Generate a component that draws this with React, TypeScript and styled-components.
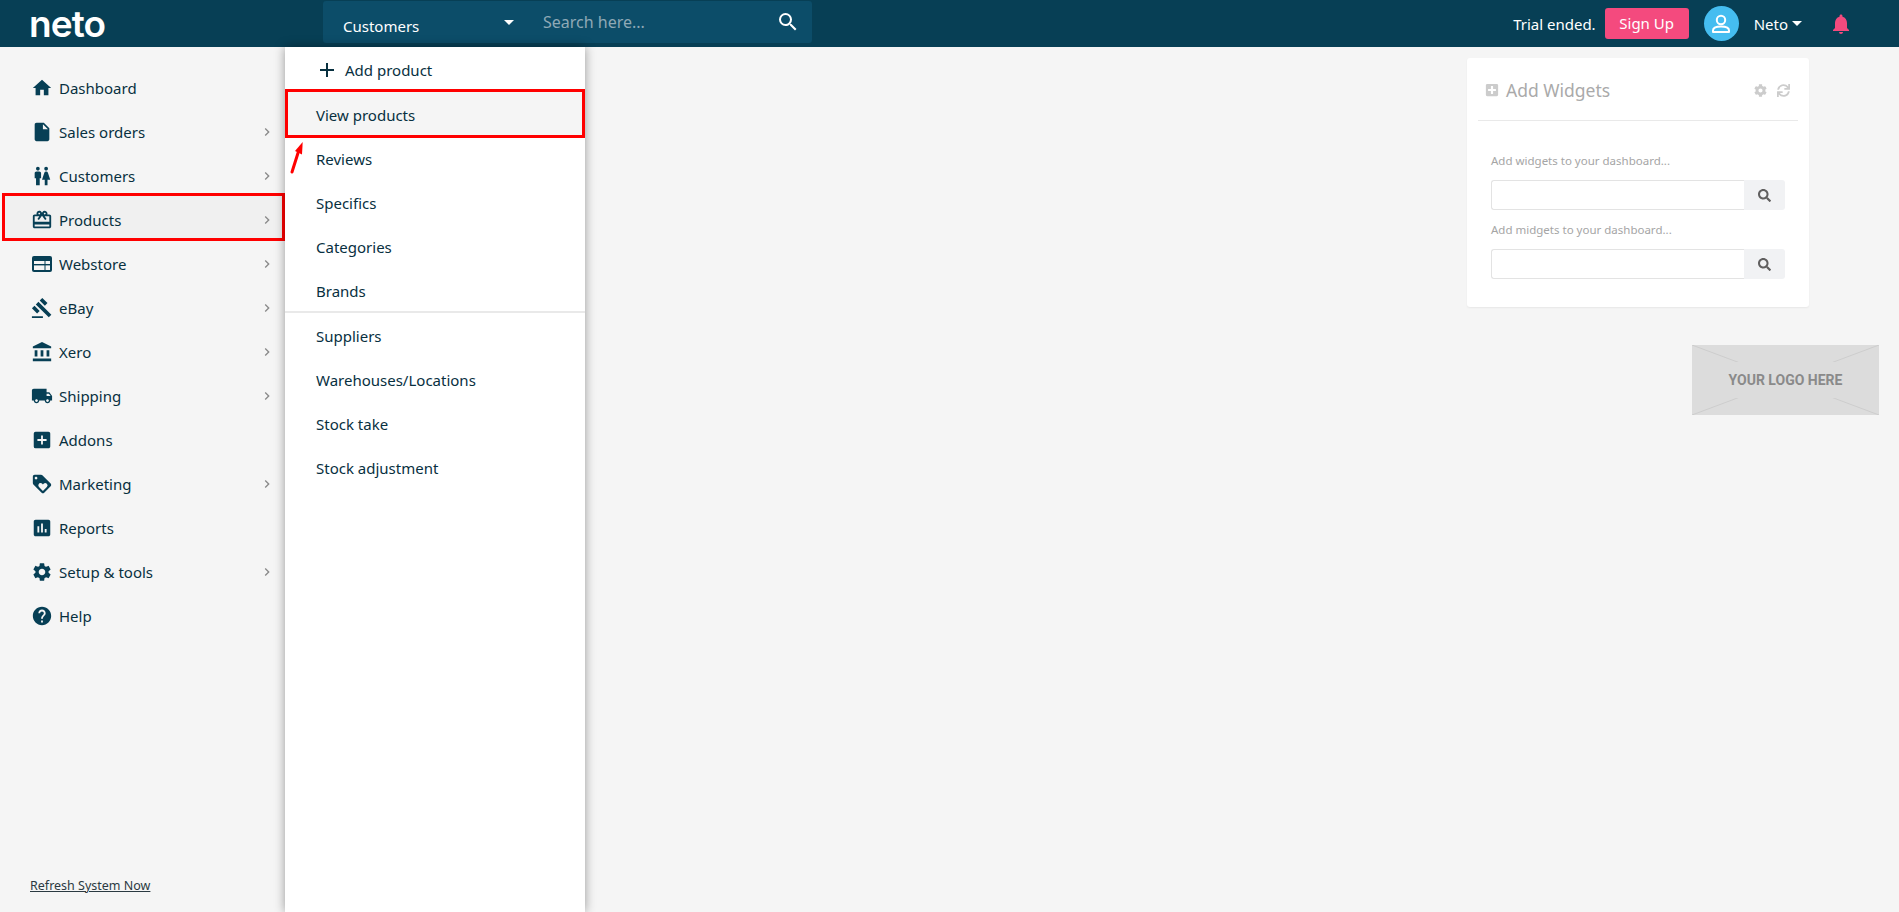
import React from "react";
import styled, { createGlobalStyle } from "styled-components";
import {
  MdHome, MdInsertDriveFile, MdWc, MdCardGiftcard, MdGavel, MdAccountBalance,
  MdLocalShipping, MdAddBox, MdLoyalty, MdAssessment, MdSettings, MdHelp, MdChevronRight,
  MdSearch, MdAdd, MdNotifications,
} from "react-icons/md";
import { FaPlusSquare, FaCog, FaSync, FaSearch } from "react-icons/fa";

const Global = createGlobalStyle`
  html, body { margin: 0; height: 100%; background: #f5f5f5; }
  body { font-family: "Noto Sans", "Open Sans", sans-serif; color: #08303f; overflow: hidden; }
  * { box-sizing: border-box; }
`;

const Page = styled.div`
  position: relative;
  display: flex;
  flex-direction: column;
  height: 912px;
`;

const TopBar = styled.header`
  display: flex;
  align-items: center;
  height: 47px;
  flex: none;
  background: #073f55;
  color: #fff;
`;

const Logo = styled.div`
  width: 323px;
  padding-left: 29px;
  font-family: "Inter", sans-serif;
  font-size: 37px;
  font-weight: 600;
  letter-spacing: -0.9px;
  line-height: 40px;
`;

const SearchBar = styled.div`
  display: flex;
  width: 489px;
  height: 42px;
  margin-top: -3px;
  background: #0c4d69;
  border-radius: 3px;
`;

const ScopeSelect = styled.div`
  display: flex;
  align-items: flex-end;
  justify-content: space-between;
  width: 220px;
  padding: 0 29px 7px 20px;
  font-size: 15px;
  line-height: 20px;
`;

const Caret = styled.span<{ $size?: number }>`
  display: inline-block;
  width: 0;
  height: 0;
  border-left: ${(p) => p.$size ?? 5}px solid transparent;
  border-right: ${(p) => p.$size ?? 5}px solid transparent;
  border-top: ${(p) => p.$size ?? 5}px solid #fff;
`;

const ScopeCaret = styled(Caret)`
  margin-bottom: 11px;
`;

const SearchText = styled.div`
  flex: 1;
  display: flex;
  align-items: center;
  justify-content: space-between;
  padding: 0 12px 1px 0;
  color: #8fa9b6;
  font-size: 16px;
`;

const TopRight = styled.div`
  display: flex;
  align-items: center;
  margin-left: auto;
  padding-right: 46px;
  font-size: 15px;
`;

const SignUp = styled.button`
  width: 84px;
  height: 31px;
  margin: 0 0 1px 9px;
  padding: 0;
  border: 0;
  border-radius: 3px;
  background: #f44a7e;
  color: #fff;
  font: inherit;
  font-size: 15px;
`;

const Avatar = styled.div`
  display: flex;
  align-items: center;
  justify-content: center;
  width: 35px;
  height: 35px;
  margin-left: 15px;
  border-radius: 50%;
  background: #45bdf0;
`;

const UserName = styled.div`
  display: flex;
  align-items: center;
  gap: 4px;
  margin-left: 15px;
`;

const Bell = styled.div`
  display: flex;
  margin-left: 27px;
  color: #f44a7e;
`;

const Body = styled.div`
  flex: 1;
  display: flex;
  min-height: 0;
`;

const Sidebar = styled.nav`
  display: flex;
  flex-direction: column;
  width: 285px;
  flex: none;
  padding-top: 19px;
`;

const NavRow = styled.div<{ $active?: boolean }>`
  display: flex;
  align-items: center;
  height: 44px;
  flex: none;
  padding-left: 31px;
  padding-right: 10px;
  font-size: 15px;
  ${(p) =>
    p.$active &&
    `height: 48px;
     margin: -5px 0 1px 2px;
     padding: 6px 10px 0 29px;
     background: #f0f0f0;
     outline: 3px solid #f00;
     outline-offset: -3px;`}
`;

const NavIcon = styled.span`
  display: flex;
  justify-content: center;
  width: 22px;
  margin-right: 6px;
  font-size: 24px;
  color: #073f55;
`;

const NavLabel = styled.span`
  flex: 1;
`;

const Chevron = styled.span`
  display: flex;
  color: #8a8a8a;
  font-size: 16px;
`;

const RefreshLink = styled.a`
  margin-top: auto;
  margin-bottom: 18px;
  margin-left: 30px;
  font-size: 12.5px;
  color: #2b3a42;
  text-decoration: underline;
`;

const SubMenu = styled.aside`
  position: absolute;
  left: 285px;
  top: 47px;
  bottom: 0;
  width: 300px;
  padding-top: 1px;
  background: #fff;
  box-shadow: 0 0 10px rgba(0, 0, 0, 0.38);
`;

const SubRow = styled.div<{ $active?: boolean }>`
  display: flex;
  align-items: center;
  height: 44px;
  padding-left: 31px;
  font-size: 15px;
  ${(p) =>
    p.$active &&
    `height: 49px;
     margin: -3px 0 -1px;
     padding-top: 3px;
     background: #f5f5f5;
     outline: 3px solid #f00;
     outline-offset: -3px;`}
`;

const AddRow = styled(SubRow)`
  padding-left: 30px;
  gap: 6px;
`;

const SubDivider = styled.div`
  height: 2px;
  background: #e9e9e9;
  margin: -2px 0 1px;
`;

const ArrowMark = styled.svg`
  position: absolute;
  left: 286px;
  top: 141px;
`;

const Main = styled.main`
  flex: 1;
  display: flex;
  flex-direction: column;
  align-items: flex-end;
  padding: 11px 20px 0 0;
`;

const WidgetCard = styled.section`
  width: 342px;
  height: 249px;
  margin-right: 70px;
  padding: 0 11px;
  background: #fff;
  border-radius: 3px;
  box-shadow: 0 1px 2px rgba(0, 0, 0, 0.06);
`;

const CardHead = styled.div`
  display: flex;
  align-items: center;
  height: 63px;
  padding: 2px 8px 0 7px;
  border-bottom: 1px solid #e9e9e9;
`;

const CardTitle = styled.h3`
  flex: 1;
  margin: 0 0 0 7px;
  font-size: 17.5px;
  font-weight: 400;
  color: #aaa;
`;

const CardTools = styled.div`
  display: flex;
  gap: 10px;
  color: #ccc;
  font-size: 13px;
`;

const CardBody = styled.div`
  padding: 31px 13px 0;
`;

const FieldLabel = styled.div`
  height: 17px;
  margin-bottom: 11px;
  font-size: 11.5px;
  line-height: 17px;
  color: #a5a5a5;
`;

const FieldRow = styled.div`
  display: flex;
  height: 30px;
  margin-bottom: 11px;
`;

const FieldInput = styled.div`
  flex: 1;
  border: 1px solid #e3e3e3;
  border-right: 0;
  border-radius: 3px 0 0 3px;
`;

const FieldButton = styled.div`
  display: flex;
  align-items: center;
  justify-content: center;
  width: 41px;
  background: #f1f2f4;
  color: #605f5f;
  border-radius: 0 3px 3px 0;
  font-size: 13px;
`;

const LogoPlaceholder = styled.div`
  position: relative;
  display: flex;
  align-items: center;
  justify-content: center;
  width: 187px;
  height: 70px;
  margin-top: 38px;
  background: #dcdcdc;
  font-family: "Roboto", sans-serif;
  font-size: 14px;
  font-weight: 700;
  color: #8a8a8a;
`;

const PlaceholderCross = styled.svg`
  position: absolute;
  inset: 0;
  width: 100%;
  height: 100%;
`;

const PlaceholderText = styled.span`
  position: relative;
  padding: 10px 0;
  background: #dcdcdc;
`;

const WebstoreIcon = () => (
  <svg width="20" height="16" viewBox="0 0 20 16" style={{ margin: "4px 0" }}>
    <rect width="20" height="16" rx="2" fill="#073f55" />
    <rect x="2" y="5" width="10.5" height="9" fill="#f5f5f5" />
    <rect x="13.5" y="5" width="4.5" height="9" fill="#f5f5f5" />
    <rect x="2" y="8" width="16" height="1.4" fill="#073f55" />
  </svg>
);

const nav: [string, React.ComponentType, boolean][] = [
  ["Dashboard", MdHome, false],
  ["Sales orders", MdInsertDriveFile, true],
  ["Customers", MdWc, true],
  ["Products", MdCardGiftcard, true],
  ["Webstore", WebstoreIcon, true],
  ["eBay", MdGavel, true],
  ["Xero", MdAccountBalance, true],
  ["Shipping", MdLocalShipping, true],
  ["Addons", MdAddBox, false],
  ["Marketing", MdLoyalty, true],
  ["Reports", MdAssessment, false],
  ["Setup & tools", MdSettings, true],
  ["Help", MdHelp, false],
];

const UserGlyph = () => (
  <svg width="22" height="22" viewBox="0 0 22 22" fill="none" stroke="#fff" strokeWidth="2">
    <circle cx="11" cy="7" r="4.2" />
    <path d="M3 19v-1.5C3 15 6 13.6 11 13.6s8 1.4 8 3.9V19z" strokeLinejoin="round" />
  </svg>
);

export default function App() {
  return (
    <Page>
      <Global />
      <TopBar>
        <Logo>neto</Logo>
        <SearchBar>
          <ScopeSelect>
            <span>Customers</span>
            <ScopeCaret />
          </ScopeSelect>
          <SearchText>
            <span>Search here...</span>
            <MdSearch size={24} color="#fff" />
          </SearchText>
        </SearchBar>
        <TopRight>
          <span>Trial ended.</span>
          <SignUp>Sign Up</SignUp>
          <Avatar><UserGlyph /></Avatar>
          <UserName>Neto <Caret $size={5} /></UserName>
          <Bell><MdNotifications size={24} /></Bell>
        </TopRight>
      </TopBar>
      <Body>
        <Sidebar>
          {nav.map(([label, Icon, sub]) => (
            <NavRow key={label} $active={label === "Products"}>
              <NavIcon><Icon /></NavIcon>
              <NavLabel>{label}</NavLabel>
              {sub && <Chevron><MdChevronRight /></Chevron>}
            </NavRow>
          ))}
          <RefreshLink>Refresh System Now</RefreshLink>
        </Sidebar>
        <Main>
          <WidgetCard>
            <CardHead>
              <FaPlusSquare size={14} color="#ccc" />
              <CardTitle>Add Widgets</CardTitle>
              <CardTools><FaCog /><FaSync /></CardTools>
            </CardHead>
            <CardBody>
              <FieldLabel>Add widgets to your dashboard...</FieldLabel>
              <FieldRow><FieldInput /><FieldButton><FaSearch /></FieldButton></FieldRow>
              <FieldLabel>Add midgets to your dashboard...</FieldLabel>
              <FieldRow><FieldInput /><FieldButton><FaSearch /></FieldButton></FieldRow>
            </CardBody>
          </WidgetCard>
          <LogoPlaceholder>
            <PlaceholderCross viewBox="0 0 187 70" preserveAspectRatio="none">
              <path d="M0 0L187 70M187 0L0 70" stroke="#cdcdcd" strokeWidth="1" />
            </PlaceholderCross>
            <PlaceholderText>YOUR LOGO HERE</PlaceholderText>
          </LogoPlaceholder>
        </Main>
      </Body>
      <SubMenu>
        <AddRow><MdAdd size={24} />Add product</AddRow>
        <SubRow $active>View products</SubRow>
        <SubRow>Reviews</SubRow>
        <SubRow>Specifics</SubRow>
        <SubRow>Categories</SubRow>
        <SubRow>Brands</SubRow>
        <SubDivider />
        <SubRow>Suppliers</SubRow>
        <SubRow>Warehouses/Locations</SubRow>
        <SubRow>Stock take</SubRow>
        <SubRow>Stock adjustment</SubRow>
      </SubMenu>
      <ArrowMark width="20" height="36" viewBox="0 0 20 36">
        <path d="M6 31L12 12" stroke="#f00" strokeWidth="3" strokeLinecap="round" />
        <path d="M16.7 1L16 13.5L9 10z" fill="#f00" />
      </ArrowMark>
    </Page>
  );
}
